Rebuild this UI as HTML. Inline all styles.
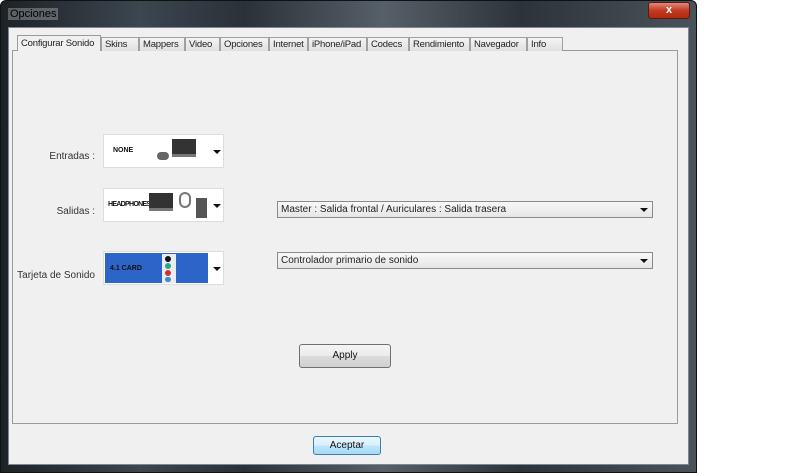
<!DOCTYPE html>
<html><head><style>
*{margin:0;padding:0;box-sizing:border-box}
body{width:800px;height:473px;background:#fff;position:relative;overflow:hidden;font-family:"Liberation Sans",sans-serif;font-size:10px;color:#111}
.a{position:absolute}
#win{left:0;top:0;width:697px;height:473px;background:linear-gradient(90deg,#1d2226 0,#3b4650 20%,#2a3139 35%,#566068 55%,#2c333a 75%,#4a535b 100%);border:1px solid #111;border-radius:6px 6px 0 0}
#client{left:8px;top:27px;width:681px;height:438px;background:#f0f0f0;border:1px solid #7d8790}
.tab{position:absolute;top:37px;height:14px;border:1px solid #a0a0a0;border-bottom:none;background:linear-gradient(#f4f4f4,#e0e0e0);font-size:9.5px;letter-spacing:-0.2px;line-height:13px;padding-left:3px;color:#222;white-space:nowrap;overflow:hidden}
#panel{left:12px;top:50px;width:666px;height:374px;border:1px solid #9a9a9a;background:#f0f0f0}
.lbl{font-size:10px;color:#333;text-align:right}
.ic{background:#fff;border:1px solid #ddd}
.arr{position:absolute;width:0;height:0;border-left:4px solid transparent;border-right:4px solid transparent;border-top:4px solid #111}
.cb{background:linear-gradient(#f8f8f8,#e6e6e6);border:1px solid #8a8a8a;font-size:10px;line-height:15px;padding-left:3px;color:#222}
.btn{border:1px solid #707070;border-radius:3px;background:linear-gradient(#f4f4f4 0,#ececec 50%,#dcdcdc 51%,#d0d0d0);text-align:center;font-size:10px}
</style></head><body>
<div id="win" class="a"></div>
<div class="a" style="left:8px;top:8px;font-size:11px;color:#000;background:rgba(200,205,210,.35);padding:0 2px">Opciones</div>
<div class="a" style="left:648px;top:2px;width:42px;height:17px;border-radius:3px;background:linear-gradient(#e08a7a,#c23a22 50%,#b02a14);border:1px solid #5a1a10;color:#fff;text-align:center;font-weight:bold;font-size:11px;line-height:15px">x</div>
<div id="client" class="a"></div>
<div id="panel" class="a"></div>
<div class="tab" style="left:17px;top:35px;height:16px;background:#f0f0f0;width:84px;border-color:#9a9a9a;line-height:15px">Configurar Sonido</div>
<div class="tab" style="left:101px;width:38px">Skins</div>
<div class="tab" style="left:139px;width:46px">Mappers</div>
<div class="tab" style="left:185px;width:35px">Video</div>
<div class="tab" style="left:220px;width:49px">Opciones</div>
<div class="tab" style="left:269px;width:39px">Internet</div>
<div class="tab" style="left:308px;width:59px">iPhone/iPad</div>
<div class="tab" style="left:367px;width:42px">Codecs</div>
<div class="tab" style="left:409px;width:61px">Rendimiento</div>
<div class="tab" style="left:470px;width:57px">Navegador</div>
<div class="tab" style="left:527px;width:36px">Info</div>

<div class="a lbl" style="left:30px;top:151px;width:65px">Entradas :</div>
<div class="a lbl" style="left:30px;top:206px;width:65px">Salidas :</div>
<div class="a lbl" style="left:10px;top:270px;width:85px">Tarjeta de Sonido</div>

<div class="a ic" style="left:103px;top:134px;width:121px;height:34px"></div>
<div class="a" style="left:113px;top:147px;font-size:7px;font-weight:bold">NONE</div>
<div class="a" style="left:172px;top:139px;width:24px;height:18px;background:#333;border-bottom:3px solid #777"></div>
<div class="a" style="left:157px;top:152px;width:12px;height:8px;background:#666;border-radius:5px"></div>
<div class="arr" style="left:213px;top:150px"></div>

<div class="a ic" style="left:103px;top:188px;width:121px;height:34px"></div>
<div class="a" style="left:108px;top:201px;font-size:7px;font-weight:bold;letter-spacing:-.7px">HEADPHONES</div>
<div class="a" style="left:149px;top:193px;width:24px;height:18px;background:#333;border-bottom:3px solid #777"></div>
<div class="a" style="left:179px;top:192px;width:12px;height:16px;border:2px solid #777;border-radius:6px"></div>
<div class="a" style="left:196px;top:198px;width:11px;height:20px;background:#555"></div>
<div class="arr" style="left:213px;top:204px"></div>

<div class="a ic" style="left:103px;top:251px;width:121px;height:34px"></div>
<div class="a" style="left:105px;top:253px;width:103px;height:30px;background:#2d64c8"></div>
<div class="a" style="left:110px;top:265px;font-size:7px;font-weight:bold;color:#111">4.1 CARD</div>
<div class="a" style="left:162px;top:254px;width:14px;height:29px;background:#e8ecf0"></div>
<div class="a" style="left:165px;top:256px;width:6px;height:6px;border-radius:3px;background:#111"></div>
<div class="a" style="left:165px;top:263px;width:6px;height:6px;border-radius:3px;background:#2a8"></div>
<div class="a" style="left:165px;top:270px;width:6px;height:6px;border-radius:3px;background:#c33"></div>
<div class="a" style="left:165px;top:277px;width:6px;height:5px;border-radius:3px;background:#48c"></div>
<div class="arr" style="left:213px;top:267px"></div>

<div class="a cb" style="left:277px;top:201px;width:376px;height:17px">Master : Salida frontal / Auriculares : Salida trasera</div>
<div class="arr" style="left:640px;top:208px"></div>
<div class="a cb" style="left:277px;top:252px;width:376px;height:17px">Controlador primario de sonido</div>
<div class="arr" style="left:640px;top:259px"></div>

<div class="a btn" style="left:299px;top:344px;width:92px;height:24px;line-height:22px">Apply</div>
<div class="a btn" style="left:313px;top:436px;width:68px;height:19px;line-height:17px;border-color:#3c7fb1;background:linear-gradient(#eaf6fd,#d9f0fc 50%,#bee6fd 51%,#a7d9f5)">Aceptar</div>
</body></html>
